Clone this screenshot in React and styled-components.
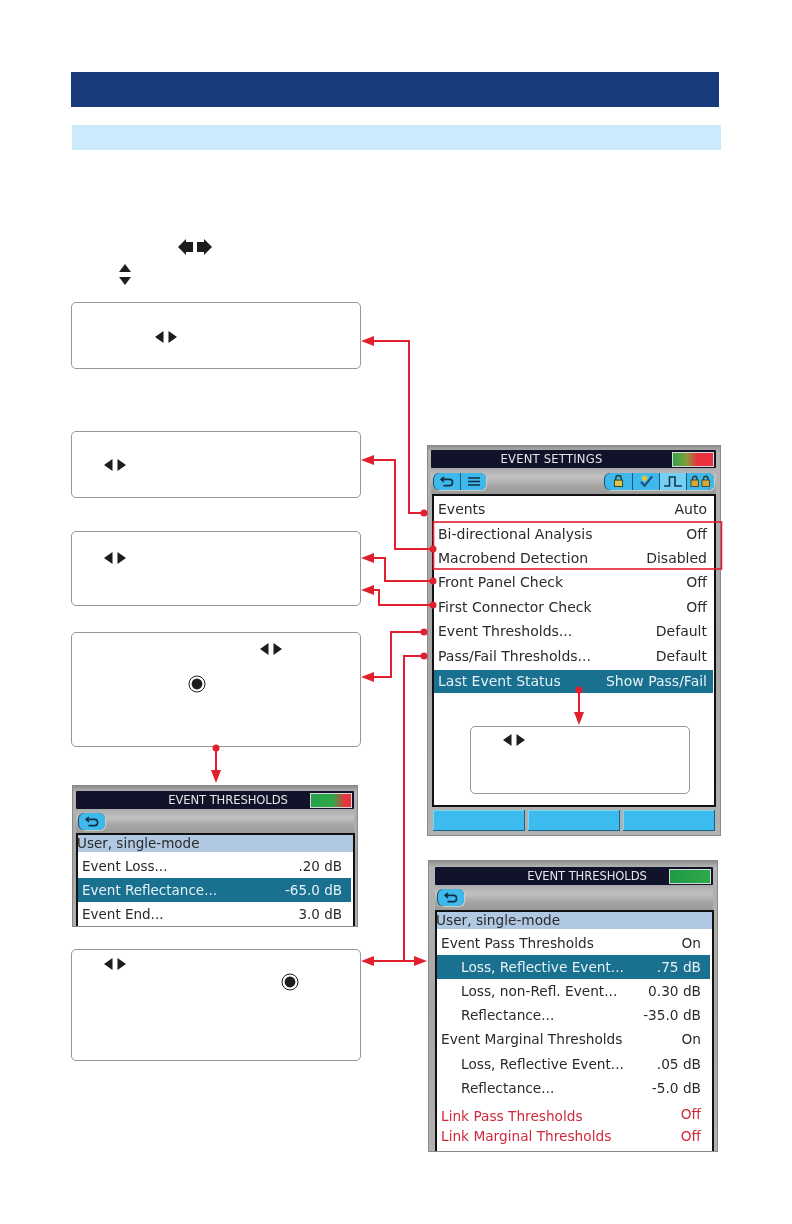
import React from "react";
import styled, { createGlobalStyle } from "styled-components";

const RED = "#e21f2f";
const INK = "#1d1d1b";

const GlobalStyle = createGlobalStyle`
  html, body {
    margin: 0;
    padding: 0;
    background: #fff;
  }
  body {
    font-family: "DejaVu Sans", "Liberation Sans", sans-serif;
  }
`;

const Page = styled.div`
  position: relative;
  width: 792px;
  height: 1224px;
  box-sizing: border-box;
  padding: 72px 0 0 71px;
  background: #fff;
  overflow: hidden;
`;

const Banner = styled.div`
  width: 648px;
  height: 35px;
  background: #183c7b;
`;

const SubBanner = styled.div`
  width: 649px;
  height: 25px;
  margin: 18px 0 0 1px;
  background: #cbeafb;
`;

const Intro = styled.div`
  display: flex;
  flex-direction: column;
  height: 152px;
  box-sizing: border-box;
  padding-top: 89px;
`;

const IntroIcon = styled.svg`
  display: block;
  margin-left: ${(p) => p.$left}px;
  margin-top: ${(p) => p.$top || 0}px;
  fill: ${INK};
`;

const Columns = styled.div`
  display: grid;
  grid-template-columns: 290px 294px;
  column-gap: 66px;
  align-items: start;
`;

const LeftColumn = styled.div`
  display: flex;
  flex-direction: column;
`;

const RightColumn = styled.div`
  display: flex;
  flex-direction: column;
  padding-top: 143px;
`;

const Note = styled.div`
  box-sizing: border-box;
  height: ${(p) => p.$height}px;
  width: ${(p) => p.$width || 290}px;
  margin-top: ${(p) => p.$top || 0}px;
  margin-left: ${(p) => p.$left || 0}px;
  padding-top: ${(p) => p.$padTop}px;
  padding-left: ${(p) => p.$padLeft}px;
  border: 1.3px solid #979797;
  border-radius: 5px;
  background: #fff;
`;

const Keys = styled.svg`
  display: block;
  fill: ${INK};
`;

const RadioMark = styled.svg`
  display: block;
  margin-top: ${(p) => p.$top}px;
  margin-left: ${(p) => p.$left}px;
`;

/* device screen parts */
const Frame = styled.div`
  box-sizing: border-box;
  width: ${(p) => p.$width}px;
  height: ${(p) => p.$height}px;
  margin-top: ${(p) => p.$top || 0}px;
  margin-left: ${(p) => p.$left || 0}px;
  padding: ${(p) => p.$pad};
  overflow: hidden;
  background: linear-gradient(180deg, #8f8f8f 0, #b4b4b2 6px, #a5a6a4 50%, #b1b2b0 100%);
  border: 1px solid #8a8a8a;
  filter: blur(0.4px);
`;

const TitleBar = styled.div`
  display: flex;
  align-items: center;
  height: 18px;
  padding-right: 2px;
  background: #10132a;
  border-radius: 1px;
`;

const Title = styled.div`
  flex: 1;
  box-sizing: border-box;
  padding-left: ${(p) => p.$shift || 0}px;
  text-align: center;
  font-size: 11.6px;
  letter-spacing: ${(p) => p.$spacing ?? -0.1}px;
  color: #e6e6e6;
  white-space: nowrap;
`;

const Gauge = styled.div`
  box-sizing: border-box;
  width: ${(p) => p.$width || 42}px;
  height: 15px;
  border: 1px solid #d8d8d8;
  background: ${(p) => p.$fill};
`;

const Toolbar = styled.div`
  display: flex;
  align-items: center;
  justify-content: space-between;
  height: ${(p) => p.$height}px;
  padding: 0 2px 0 ${(p) => p.$left || 3}px;
  background: linear-gradient(180deg, #a9aaa9 0, #c0c1c0 35%, #a4a5a3 70%, #9a9b99 100%);
`;

const ButtonGroup = styled.div`
  display: flex;
  height: 17px;
  border-radius: 6px;
  overflow: hidden;
  background: #135a7f;
  gap: 1px;
  box-shadow: -1px 0 0 #14506f, 1px 1px 1px #d0d0d0;
`;

const ToolButton = styled.div`
  display: flex;
  align-items: center;
  justify-content: center;
  width: ${(p) => p.$width}px;
  background: ${(p) => (p.$active ? "#74d1f4" : "#3fb9ec")};
`;

const Panel = styled.div`
  box-sizing: border-box;
  height: ${(p) => p.$height}px;
  width: ${(p) => p.$width}px;
  margin-left: ${(p) => p.$left || 0}px;
  background: #fff;
  border: 2px solid #111;
  border-bottom-width: ${(p) => (p.$open ? 0 : 2)}px;
  padding-top: ${(p) => p.$padTop || 0}px;
  font-size: ${(p) => p.$font}px;
  color: #2a2a2a;
`;

const ListHeader = styled.div`
  height: 17px;
  line-height: 17px;
  margin-bottom: 2px;
  text-indent: -1px;
  background: #b1c8e2;
  color: #2a2a2a;
  white-space: nowrap;
`;

const Row = styled.div`
  display: flex;
  align-items: center;
  justify-content: space-between;
  height: ${(p) => p.$height}px;
  margin: ${(p) => p.$top || 0}px ${(p) => (p.$compact ? 2 : 1)}px 0 0;
  padding: 0 ${(p) => p.$end}px 0 ${(p) => (p.$indent ? 24 : 4)}px;
  white-space: nowrap;
  color: ${(p) => (p.$selected ? "#e4f1f6" : p.$alert ? "#cf2a3a" : "inherit")};
  background: ${(p) => (p.$selected ? "#19708f" : "transparent")};

  span:last-child {
    margin-bottom: ${(p) => p.$lift || 0}px;
  }
`;

const AlertGroup = styled.div`
  margin-top: 7px;
`;

const SoftKeys = styled.div`
  display: flex;
  gap: 3px;
  height: 21px;
  margin: 3px 1px 0 2px;
`;

const SoftKey = styled.div`
  flex: 1;
  background: #3cbcee;
  box-shadow: inset -1px -1px 0 #16648c, inset 1px 1px 0 #7fd4f4;
`;

const Overlay = styled.svg`
  position: absolute;
  top: 0;
  left: 0;
  pointer-events: none;
  z-index: 2;
`;

const RedFrame = styled.rect`
  fill: none;
  stroke: ${RED};
  stroke-width: 1.6;
`;

const Line = styled.path`
  fill: none;
  stroke: ${RED};
  stroke-width: 2;
`;

const Head = styled.polygon`
  fill: ${RED};
`;

const Dot = styled.circle`
  fill: ${RED};
`;

function ArrowPair() {
  return (
    <Keys width="22" height="12" viewBox="0 0 22 12">
      <path d="M0 6 L8.5 0 V12 Z" />
      <path d="M13.5 0 L22 6 L13.5 12 Z" />
    </Keys>
  );
}

function Radio({ top, left }) {
  return (
    <RadioMark $top={top} $left={left} width="18" height="18" viewBox="0 0 18 18">
      <circle cx="9" cy="9" r="8" fill="#fff" stroke={INK} strokeWidth="1" />
      <circle cx="9" cy="9" r="5.4" fill={INK} />
    </RadioMark>
  );
}

function BackIcon() {
  return (
    <svg width="14" height="11" viewBox="0 0 14 11" fill="none" stroke="#0f2f46" strokeWidth="1.6">
      <path d="M4 1 L1.2 3.4 L4 5.8" />
      <path d="M1.5 3.4 H9.5 A3 3 0 0 1 9.5 9.6 H3.5" />
    </svg>
  );
}

function MenuIcon() {
  return (
    <svg width="14" height="9" viewBox="0 0 14 9" fill="none" stroke="#0f2f46" strokeWidth="1.5">
      <path d="M1 1 H13 M1 4.5 H13 M1 8 H13" />
    </svg>
  );
}

function LockIcon() {
  return (
    <svg width="11" height="14" viewBox="0 0 12 14">
      <path d="M3 6 V4 A3 3 0 0 1 9 4 V6" fill="none" stroke="#2f3a22" strokeWidth="1.5" />
      <rect x="1.5" y="6" width="9" height="7" fill="#d8c54a" stroke="#2f3a22" strokeWidth="1" />
    </svg>
  );
}

function CheckIcon() {
  return (
    <svg width="15" height="14" viewBox="0 0 16 14">
      <circle cx="6" cy="4" r="3" fill="#d8c54a" />
      <path d="M2 8 L6 12 L14 2" fill="none" stroke="#1d4c86" strokeWidth="2.2" />
    </svg>
  );
}

function PulseIcon() {
  return (
    <svg width="20" height="13" viewBox="0 0 20 13" fill="none" stroke="#123a52" strokeWidth="1.6">
      <path d="M1 11 H6.5 V2 H12 V11 H19" />
    </svg>
  );
}

function TwoLocksIcon() {
  return (
    <svg width="21" height="12" viewBox="0 0 21 12">
      <path d="M2.5 5 V3.5 A2.2 2.2 0 0 1 7 3.5 V5 M13.5 5 V3.5 A2.2 2.2 0 0 1 18 3.5 V5" fill="none" stroke="#2f3a22" strokeWidth="1.3" />
      <rect x="1" y="5" width="7.5" height="6.5" fill="#d8a83a" stroke="#2f3a22" strokeWidth="0.8" />
      <rect x="12" y="5" width="7.5" height="6.5" fill="#d8a83a" stroke="#2f3a22" strokeWidth="0.8" />
    </svg>
  );
}

const settingsRows = [
  ["Events", "Auto"],
  ["Bi-directional Analysis", "Off"],
  ["Macrobend Detection", "Disabled"],
  ["Front Panel Check", "Off"],
  ["First Connector Check", "Off"],
  ["Event Thresholds...", "Default"],
  ["Pass/Fail Thresholds...", "Default"],
];

const passRows = [
  ["Event Pass Thresholds", "On"],
  ["Loss, Reflective Event...", ".75 dB", true, true],
  ["Loss, non-Refl. Event...", "0.30 dB", true],
  ["Reflectance...", "-35.0 dB", true],
  ["Event Marginal Thresholds", "On"],
  ["Loss, Reflective Event...", ".05 dB", true],
  ["Reflectance...", "-5.0 dB", true],
];

const eventRows = [
  ["Event Loss...", ".20 dB"],
  ["Event Reflectance...", "-65.0 dB", false, true],
  ["Event End...", "3.0 dB"],
];

function Cells({ label, value }) {
  return (
    <>
      <span>{label}</span>
      <span>{value}</span>
    </>
  );
}

function Connectors() {
  return (
    <Overlay width="792" height="1224" viewBox="0 0 792 1224">
      <RedFrame x="433.5" y="522" width="288" height="47" />

      <Line d="M372 341 H409 V513 H424" />
      <Head points="361,341 374,336 374,346" />
      <Dot cx="424" cy="513" r="3.5" />

      <Line d="M372 460 H395 V549 H433" />
      <Head points="361,460 374,455 374,465" />
      <Dot cx="433" cy="549" r="3.5" />

      <Line d="M372 558 H385 V581 H433" />
      <Head points="361,558 374,553 374,563" />
      <Dot cx="433" cy="581" r="3.5" />

      <Line d="M372 590 H379 V605 H433" />
      <Head points="361,590 374,585 374,595" />
      <Dot cx="433" cy="605" r="3.5" />

      <Line d="M372 677 H391 V632 H424" />
      <Head points="361,677 374,672 374,682" />
      <Dot cx="424" cy="632" r="3.5" />

      <Line d="M424 656 H404 V961" />
      <Dot cx="424" cy="656" r="3.5" />
      <Line d="M372 961 H416" />
      <Head points="361,961 374,956 374,966" />
      <Head points="427,961 414,956 414,966" />

      <Line d="M216 748 V772" />
      <Dot cx="216" cy="748" r="3.5" />
      <Head points="216,783 211,770 221,770" />

      <Line d="M579 690 V714" />
      <Dot cx="579" cy="690" r="3.5" />
      <Head points="579,725 574,712 584,712" />
    </Overlay>
  );
}

export default function App() {
  return (
    <Page>
      <GlobalStyle />
      <Banner />
      <SubBanner />
      <Intro>
        <IntroIcon $left={107} width="34" height="16" viewBox="0 0 34 16">
          <path d="M0 8 L8 0 V3 H15 V13 H8 V16 Z" />
          <path d="M19 3 H26 V0 L34 8 L26 16 V13 H19 Z" />
        </IntroIcon>
        <IntroIcon $left={48} $top={9} width="12" height="21" viewBox="0 0 12 21">
          <path d="M6 0 L12 8 H0 Z" />
          <path d="M0 13 H12 L6 21 Z" />
        </IntroIcon>
      </Intro>

      <Columns>
        <LeftColumn>
          <Note $height={67} $padTop={28} $padLeft={83}>
            <ArrowPair />
          </Note>
          <Note $top={62} $height={67} $padTop={27} $padLeft={32}>
            <ArrowPair />
          </Note>
          <Note $top={33} $height={75} $padTop={20} $padLeft={32}>
            <ArrowPair />
          </Note>
          <Note $top={26} $height={115} $padTop={10} $padLeft={188}>
            <ArrowPair />
            <Radio top={20} left={-72} />
          </Note>

          <Frame $top={38} $left={1} $width={286} $height={142} $pad="5px 3px 0 3px">
            <TitleBar>
              <Title $shift={70}>EVENT THRESHOLDS</Title>
              <Gauge $fill="linear-gradient(90deg, #27a24a 0, #2fa648 55%, #e8333f 85%, #ea3340 100%)" />
            </TitleBar>
            <Toolbar $height={24} $left={3}>
              <ButtonGroup>
                <ToolButton $width={26}>
                  <BackIcon />
                </ToolButton>
              </ButtonGroup>
            </Toolbar>
            <Panel $height={101} $width={279} $left={0} $font={13.5} $open>
              <ListHeader>User, single-mode</ListHeader>
              {eventRows.map(([label, value, indent, selected]) => (
                <Row key={label} $height={24} $end={9} $compact $indent={indent} $selected={selected}>
                  <Cells label={label} value={value} />
                </Row>
              ))}
            </Panel>
          </Frame>

          <Note $top={22} $height={112} $padTop={8} $padLeft={32}>
            <ArrowPair />
            <Radio top={3} left={177} />
          </Note>
        </LeftColumn>

        <RightColumn>
          <Frame $width={294} $height={391} $pad="4px 4px 0 3px">
            <TitleBar>
              <Title $spacing={0.2}>EVENT SETTINGS</Title>
              <Gauge $fill="linear-gradient(90deg, #2fa648 0, #8a9a3a 35%, #e8333f 60%, #ea3340 100%)" />
            </TitleBar>
            <Toolbar $height={26} $left={3}>
              <ButtonGroup>
                <ToolButton $width={26}>
                  <BackIcon />
                </ToolButton>
                <ToolButton $width={25}>
                  <MenuIcon />
                </ToolButton>
              </ButtonGroup>
              <ButtonGroup>
                <ToolButton $width={27}>
                  <LockIcon />
                </ToolButton>
                <ToolButton $width={26}>
                  <CheckIcon />
                </ToolButton>
                <ToolButton $width={26} $active>
                  <PulseIcon />
                </ToolButton>
                <ToolButton $width={27}>
                  <TwoLocksIcon />
                </ToolButton>
              </ButtonGroup>
            </Toolbar>
            <Panel $height={313} $width={284} $left={1} $font={14} $padTop={1}>
              {settingsRows.map(([label, value]) => (
                <Row key={label} $height={24.4} $end={6}>
                  <Cells label={label} value={value} />
                </Row>
              ))}
              <Row $height={23} $top={2} $end={6} $selected>
                <Cells label="Last Event Status" value="Show Pass/Fail" />
              </Row>
              <Note $top={33} $left={36} $width={220} $height={68} $padTop={7} $padLeft={32}>
                <ArrowPair />
              </Note>
            </Panel>
            <SoftKeys>
              <SoftKey />
              <SoftKey />
              <SoftKey />
            </SoftKeys>
          </Frame>

          <Frame $top={24} $left={1} $width={290} $height={292} $pad="6px 4px 0 6px">
            <TitleBar>
              <Title $shift={70}>EVENT THRESHOLDS</Title>
              <Gauge $fill="linear-gradient(90deg, #1f9a46 0, #30a948 100%)" />
            </TitleBar>
            <Toolbar $height={25} $left={3}>
              <ButtonGroup>
                <ToolButton $width={26}>
                  <BackIcon />
                </ToolButton>
              </ButtonGroup>
            </Toolbar>
            <Panel $height={241} $width={279} $font={13.7} $open>
              <ListHeader>User, single-mode</ListHeader>
              {passRows.map(([label, value, indent, selected], i) => (
                <Row key={i} $height={24.1} $end={9} $compact $indent={indent} $selected={selected}>
                  <Cells label={label} value={value} />
                </Row>
              ))}
              <AlertGroup>
                <Row $height={19.5} $end={9} $compact $alert $lift={5}>
                  <Cells label="Link Pass Thresholds" value="Off" />
                </Row>
                <Row $height={19.5} $end={9} $compact $alert>
                  <Cells label="Link Marginal Thresholds" value="Off" />
                </Row>
              </AlertGroup>
            </Panel>
          </Frame>
        </RightColumn>
      </Columns>
      <Connectors />
    </Page>
  );
}
